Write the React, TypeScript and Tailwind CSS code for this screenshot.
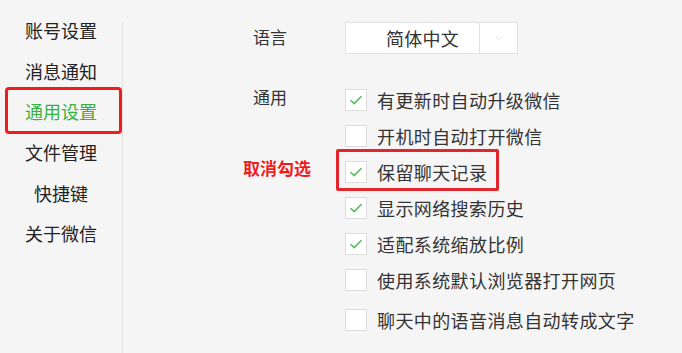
import { ChevronDown } from 'lucide-react';

const font = { fontFamily: '"Noto Sans CJK SC", "Microsoft YaHei", sans-serif' };

const menu = ['账号设置', '消息通知', '通用设置', '文件管理', '快捷键', '关于微信'];

const options = [
    { text: '有更新时自动升级微信', checked: true, label: '通用' },
    { text: '开机时自动打开微信', checked: false },
    { text: '保留聊天记录', checked: true, note: '取消勾选' },
    { text: '显示网络搜索历史', checked: true },
    { text: '适配系统缩放比例', checked: true },
    { text: '使用系统默认浏览器打开网页', checked: false },
    { text: '聊天中的语音消息自动转成文字', checked: false, extra: true },
];

function CheckBox({ checked }: { checked: boolean }) {
    return (
        <div className="w-[22px] h-[22px] border border-[#dcdcdc] bg-white flex items-center justify-center shrink-0">
            {checked && (
                <svg width="16" height="16" viewBox="0 0 16 16" fill="none">
                    <path d="M2.5 8.2 L6.2 11.6 L13.5 4.2" stroke="#55b95b" strokeWidth="1.5" />
                </svg>
            )}
        </div>
    );
}

export default function App() {
    return (
        <div className="w-[682px] h-[353px] bg-[#f5f5f5] flex overflow-hidden text-[#333]" style={font}>
            {/* sidebar */}
            <div className="w-[122px] shrink-0 pt-[10px]">
                {menu.map((item, i) => (
                    <div
                        key={item}
                        className={`relative h-[40.7px] flex items-center justify-center text-[18px] ${i === 2 ? 'text-[#3bb03e]' : 'text-[#222]'}`}
                    >
                        {item}
                        {i === 2 && (
                            <div className="absolute left-[5px] right-0 top-[-4px] bottom-[-2px] border-[3px] border-[#ee1c1c] rounded-[4px]" />
                        )}
                    </div>
                ))}
            </div>
            <div className="w-px bg-[#e3e3e3] mt-[22px]" />

            {/* content */}
            <div className="flex-1 pl-[130px] pt-[22px]">
                <div className="flex items-center">
                    <div className="w-[92px] text-[17px] text-[#333] -mt-[2px]">语言</div>
                    <div className="h-[32px] w-[173px] border border-[#e2e2e2] bg-white flex">
                        <div className="w-[133px] flex items-center justify-center pl-[20px] text-[18px] tracking-[0.3px] text-[#333]">简体中文</div>
                        <div className="w-px bg-[#e2e2e2]" />
                        <div className="flex-1 flex items-center justify-center">
                            <ChevronDown size={14} strokeWidth={1} color="#cfcfcf" />
                        </div>
                    </div>
                </div>

                <div className="mt-[28px]">
                    {options.map((o) => (
                        <div key={o.text} className={`flex items-center h-[36px] ${o.extra ? 'mt-[4px]' : ''}`}>
                            <div className="w-[92px] shrink-0">
                                {o.label && <div className="text-[17px] -mt-[6px]">{o.label}</div>}
                                {o.note && (
                                    <div
                                        className="-ml-[10px] -mt-[8px] text-[17px] font-bold text-[#f01c1c]"
                                        style={{ textShadow: '0 0 2px #fff, 0 0 2px #fff' }}
                                    >
                                        {o.note}
                                    </div>
                                )}
                            </div>
                            <div className="relative flex items-center gap-[10px]">
                                <CheckBox checked={o.checked} />
                                <span className="text-[18px] tracking-[0.4px] text-[#333] whitespace-nowrap">{o.text}</span>
                                {o.note && (
                                    <div className="absolute left-[-9px] right-[-12px] top-[-10px] bottom-[-5px] border-[3px] border-[#e3262b] rounded-[2px]" />
                                )}
                            </div>
                        </div>
                    ))}
                </div>
            </div>
        </div>
    );
}
